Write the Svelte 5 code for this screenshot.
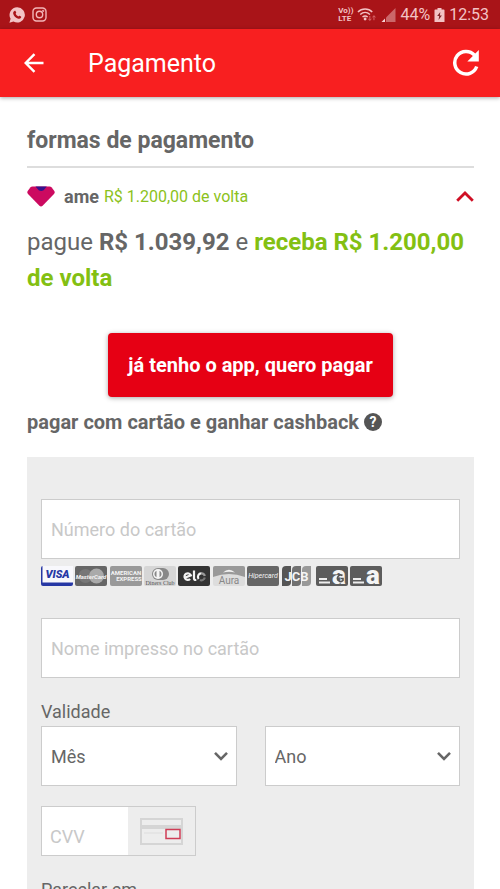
<script lang="ts">
  let open = $state(true);
  let cardNumber = $state('');
  let cardName = $state('');
  let month = $state('');
  let year = $state('');
  let cvv = $state('');
  let installments = $state('1');

  const months = Array.from({ length: 12 }, (_, i) => String(i + 1).padStart(2, '0'));
  const years = Array.from({ length: 12 }, (_, i) => String(2019 + i));
</script>

{#snippet chevron()}
  <svg class="chevron" width="16" height="10" viewBox="0 0 16 10" aria-hidden="true">
    <path d="M2 1.8l6 6 6-6" fill="none" stroke="currentColor" stroke-width="2.6" />
  </svg>
{/snippet}

<div class="screen">
  <div class="status-bar">
    <div class="status-group">
      <svg width="16" height="16" viewBox="0 0 16 16" aria-hidden="true">
        <path d="M8.2.3a7.6 7.6 0 1 1-3.7 14.2L.4 15.7l1.2-4A7.6 7.6 0 0 1 8.2.3z" fill="#f3c3c5" />
        <path d="M5.4 4c.5-.4 1-.3 1.2.2l.6 1.3c.1.4-.1.7-.6 1.3.6 1.2 1.4 2 2.7 2.6.6-.7.9-.9 1.3-.7l1.4.7c.4.3.3.8 0 1.3-.7 1-1.9 1.2-3.3.7-2.3-.9-3.7-2.3-4.4-4.4-.4-1.3.1-2.4 1.1-3z" fill="#a91418" />
      </svg>
      <svg width="15" height="15" viewBox="0 0 15 15" fill="none" stroke="#f3b5b7" stroke-width="1.4" aria-hidden="true">
        <rect x="1" y="1" width="13" height="13" rx="3.5" />
        <circle cx="7.5" cy="7.5" r="3.2" />
        <circle cx="11.2" cy="3.8" r="0.4" />
      </svg>
    </div>
    <div class="status-group tight">
      <span class="volte"><span>Vo))</span><span>LTE</span></span>
      <svg width="20" height="15" viewBox="0 0 21 15" aria-hidden="true">
        <g fill="none" stroke="#f3c3c5" stroke-width="1.5">
          <path d="M1 4.8C5 .6 12 .6 16 4.8" />
          <path d="M3.4 7.6c3-2.9 7.2-2.9 10.2 0" />
          <path d="M5.8 10.2c1.7-1.5 3.7-1.5 5.4 0" />
        </g>
        <circle cx="8.5" cy="12.2" r="1.5" fill="#f3c3c5" />
        <path d="M13.5 9v4.5M12 12l1.5 1.8L15 12M17.8 13.5V9M16.3 10.5l1.5-1.8 1.5 1.8" fill="none" stroke="#d9686b" />
      </svg>
      <svg width="15" height="14" viewBox="0 0 15 14" aria-hidden="true">
        <path d="M5 9.5L14.5 0v14H5z" fill="#cb6769" />
        <path d="M.5 14L4 10.5V14z" fill="#f6d5d6" />
      </svg>
      <span class="status-text">44%</span>
      <svg width="11" height="16" viewBox="0 0 11 16" aria-hidden="true">
        <path d="M3.5 1h4v1.5h2.2q.8 0 .8.8V15H.5V3.3q0-.8.8-.8h2.2z" fill="#f3c3c5" />
        <path d="M6.3 5L3.2 9h2L4.5 13l3.4-4.5h-2z" fill="#7f2528" />
      </svg>
      <span class="status-text">12:53</span>
    </div>
  </div>

  <header>
    <button type="button" class="icon-btn" aria-label="Voltar">
      <svg width="20" height="20" viewBox="0 0 20 20" aria-hidden="true">
        <path d="M19.5 10H2M10.5 1.2L1.7 10l8.8 8.8" fill="none" stroke="#fff" stroke-width="2.4" />
      </svg>
    </button>
    <h1>Pagamento</h1>
    <button type="button" class="icon-btn" aria-label="Recarregar">
      <svg width="28" height="28" viewBox="0 0 28 28" aria-hidden="true">
        <path d="M22.5 6.2A11.3 11.3 0 1 0 24.7 17.5" fill="none" stroke="#fff" stroke-width="3.5" />
        <path d="M26.8 1v11.5H15.3z" fill="#fff" />
      </svg>
    </button>
  </header>

  <main>
    <h2>formas de pagamento</h2>

    <button type="button" class="method" aria-expanded={open} onclick={() => (open = !open)}>
      <svg width="28" height="21" viewBox="0 0 28 21" aria-hidden="true">
        <path d="M5.5.5h17q1.3 0 2.2 1l2.6 3.5q1 1.6-.3 3L15.6 19.8q-1.6 1.4-3.2 0L1 8Q-.3 6.6.7 5l2.6-3.5q.9-1 2.2-1z" fill="#cc0a60" />
        <path d="M8.5.5h11.3l-3.2 3.8q-2.4 1.6-4.9 0z" fill="#35128c" />
      </svg>
      <span class="brand">ame</span>
      <span class="cashback">R$ 1.200,00 de volta</span>
      <svg class="toggle" class:closed={!open} width="18" height="11" viewBox="0 0 18 11" aria-hidden="true">
        <path d="M1.2 9.8L9 2l7.8 7.8" fill="none" stroke="#cf1025" stroke-width="2.8" />
      </svg>
    </button>

    {#if open}
      <p class="summary">
        pague <strong>R$ 1.039,92</strong> e <strong class="green">receba R$ 1.200,00 de volta</strong>
      </p>

      <button type="button" class="primary">já tenho o app, quero pagar</button>

      <div class="card-title">
        <h3>pagar com cartão e ganhar cashback</h3>
        <button type="button" class="help" aria-label="Ajuda">?</button>
      </div>

      <form onsubmit={(e) => e.preventDefault()}>
        <input class="field" type="text" inputmode="numeric" aria-label="Número do cartão" placeholder="Número do cartão" bind:value={cardNumber} />

        <div class="flags">
          <svg width="32" height="20" viewBox="0 0 32 20" role="img" aria-label="Visa">
            <rect width="32" height="20" rx="2" fill="#2637a4" />
            <path d="M1.5 0H32v16.5H1.5z" fill="#f8f8fc" />
            <text x="16.5" y="12" class="flag-text visa">VISA</text>
          </svg>
          <svg width="32" height="20" viewBox="0 0 32 20" role="img" aria-label="Mastercard">
            <rect width="32" height="20" rx="2" fill="#666" />
            <circle cx="10.5" cy="10" r="7" fill="#777" />
            <circle cx="21.5" cy="10" r="7.5" fill="#aaa" />
            <text x="16" y="12.5" class="flag-text script">MasterCard</text>
          </svg>
          <svg width="32" height="20" viewBox="0 0 32 20" role="img" aria-label="American Express">
            <rect width="32" height="20" rx="2" fill="#999" />
            <text x="16" y="9" class="flag-text amex">AMERICAN</text>
            <text x="19" y="15" class="flag-text amex">EXPRESS</text>
          </svg>
          <svg width="32" height="20" viewBox="0 0 32 20" role="img" aria-label="Diners Club">
            <rect width="32" height="20" rx="2" fill="#d6d6d6" />
            <rect x="8" y="2" width="17" height="12" rx="6" fill="#888" />
            <circle cx="14" cy="8" r="5" fill="#f5f5f5" />
            <path d="M12.5 4.8a3.5 3.5 0 0 0 0 6.4zM15.5 4.8a3.5 3.5 0 0 1 0 6.4z" fill="#888" />
            <text x="16" y="18.5" class="flag-text diners">Diners Club</text>
          </svg>
          <svg width="32" height="20" viewBox="0 0 32 20" role="img" aria-label="Elo">
            <rect width="32" height="20" rx="2" fill="#333" />
            <g fill="none" stroke="#f4f4f4" stroke-width="2.2">
              <path d="M6.8 11.8l6-2.5a3.3 3.3 0 1 0-.7 3.7" />
              <path d="M16 4.5v8q0 1.7 2.3 1.5" />
              <path d="M20.6 13a3.5 3.5 0 0 1 3-5.6" />
              <path d="M23.6 7.4a3.5 3.5 0 0 1 3.2 2.6" stroke="#999" />
              <path d="M26.8 11.5a3.5 3.5 0 0 1-4.8 2.5" stroke="#777" />
            </g>
          </svg>
          <svg width="32" height="20" viewBox="0 0 32 20" role="img" aria-label="Aura">
            <rect width="32" height="20" rx="2" fill="#ddd" />
            <path d="M0 2q0-2 2-2h28q2 0 2 2v9Q16 5 0 11z" fill="#999" />
            <path d="M10 6.5q6-5.5 12 0-6-1.5-12 0z" fill="#f2f2f2" />
            <text x="16" y="18" class="flag-text aura">Aura</text>
          </svg>
          <svg width="32" height="20" viewBox="0 0 32 20" role="img" aria-label="Hipercard">
            <rect width="32" height="20" rx="2" fill="#666" />
            <text x="16" y="12" class="flag-text hiper">Hipercard</text>
          </svg>
          <svg width="32" height="20" viewBox="0 0 32 20" role="img" aria-label="JCB">
            <path d="M5 0h5v16q0 4-4 4H1V4q0-4 4-4z" fill="#555" />
            <path d="M15 0h5v16q0 4-4 4h-5V4q0-4 4-4z" fill="#707070" />
            <path d="M25 0h5v16q0 4-4 4h-5V4q0-4 4-4z" fill="#999" />
            <text x="15.5" y="14.5" class="flag-text jcb">JCB</text>
          </svg>
          <svg width="32" height="20" viewBox="0 0 32 20" role="img" aria-label="Cartão Americanas Gold">
            <rect width="32" height="20" rx="2" fill="#5c5c5c" />
            <path d="M3 12h8v2H3zM3 15.5h11v2H3z" fill="#eee" />
            <text x="23" y="17.5" class="flag-text letter">a</text>
            <path d="M26.5 9.5a3.2 3.2 0 1 0 .5 5v-2h-2.5" fill="none" stroke="#555" stroke-width="1.6" />
          </svg>
          <svg width="32" height="20" viewBox="0 0 32 20" role="img" aria-label="Cartão Americanas">
            <rect width="32" height="20" rx="2" fill="#5c5c5c" />
            <path d="M3 12h8v2H3zM3 15.5h11v2H3z" fill="#eee" />
            <text x="23" y="17.5" class="flag-text letter">a</text>
          </svg>
        </div>

        <input class="field" type="text" aria-label="Nome impresso no cartão" placeholder="Nome impresso no cartão" bind:value={cardName} />

        <fieldset>
          <legend>Validade</legend>
          <div class="expiry">
            <div class="select">
              <select aria-label="Mês" bind:value={month}>
                <option value="">Mês</option>
                {#each months as m}
                  <option value={m}>{m}</option>
                {/each}
              </select>
              {@render chevron()}
            </div>
            <div class="select">
              <select aria-label="Ano" bind:value={year}>
                <option value="">Ano</option>
                {#each years as y}
                  <option value={y}>{y}</option>
                {/each}
              </select>
              {@render chevron()}
            </div>
          </div>
        </fieldset>

        <div class="cvv">
          <input type="text" inputmode="numeric" maxlength="4" aria-label="CVV" placeholder="CVV" bind:value={cvv} />
          <svg width="43" height="27" viewBox="0 0 43 27" fill="none" aria-hidden="true">
            <rect x="1" y="1" width="41" height="25" stroke="#d5d5d5" stroke-width="2" />
            <path d="M1 9h41" stroke="#d5d5d5" stroke-width="4" />
            <path d="M4 15h19" stroke="#ddd" />
            <rect x="26" y="11.5" width="14" height="9" fill="#ededed" stroke="#cf3d56" stroke-width="1.5" />
          </svg>
        </div>

        <label for="installments">Parcelar em</label>
        <div class="select">
          <select id="installments" bind:value={installments}>
            <option value="1">1x de R$ 1.039,92</option>
          </select>
          {@render chevron()}
        </div>
      </form>
    {/if}
  </main>
</div>

<style>
  :global(body) {
    margin: 0;
    background: #fff;
  }

  .screen {
    display: flex;
    flex-direction: column;
    height: 100vh;
    font-family: Roboto, "Liberation Sans", sans-serif;
    font-size: 18px;
    color: #666;
  }

  .screen :global(*) {
    box-sizing: border-box;
  }

  button,
  input,
  select {
    font: inherit;
    color: inherit;
  }

  button {
    border: none;
    padding: 0;
    background: none;
    cursor: pointer;
  }

  svg {
    display: block;
    flex-shrink: 0;
  }

  .status-bar {
    display: flex;
    align-items: center;
    justify-content: space-between;
    flex-shrink: 0;
    height: 29px;
    padding: 0 11px 0 9px;
    background: #a91418;
    color: #f3c3c5;
  }

  .status-group {
    display: flex;
    align-items: center;
    gap: 7px;
  }

  .status-group.tight {
    gap: 4px;
  }

  .volte {
    display: flex;
    flex-direction: column;
    font-size: 8px;
    font-weight: 700;
    line-height: 8px;
  }

  .status-text {
    font-size: 16px;
    line-height: 20px;
  }

  header {
    display: flex;
    align-items: center;
    flex-shrink: 0;
    height: 68px;
    padding: 0 14px;
    background: #f81f20;
    color: #fff;
    box-shadow: 0 1px 4px rgba(0, 0, 0, 0.35);
    z-index: 1;
  }

  .icon-btn {
    display: flex;
    align-items: center;
    justify-content: center;
    width: 40px;
    height: 40px;
  }

  h1 {
    flex: 1;
    margin: 2px 0 0 34px;
    font-size: 25px;
    font-weight: 400;
    line-height: 32px;
  }

  main {
    flex: 1;
    overflow-y: auto;
    padding: 30px 26px 0 27px;
    scrollbar-width: none;
  }

  h2 {
    margin: 0;
    padding-bottom: 11px;
    border-bottom: 2px solid #ddd;
    font-size: 23px;
    font-weight: 700;
    line-height: 28px;
  }

  .method {
    display: flex;
    align-items: center;
    width: 100%;
    height: 56px;
    text-align: left;
  }

  .brand {
    margin: 0 5px 0 9px;
    font-size: 18px;
    font-weight: 700;
  }

  .cashback {
    flex: 1;
    font-size: 16px;
    color: #8bc220;
  }

  .toggle.closed {
    transform: rotate(180deg);
  }

  .summary {
    margin: 0;
    font-size: 24px;
    line-height: 36px;
  }

  .summary strong {
    font-weight: 700;
  }

  .summary .green {
    color: #83c012;
  }

  .primary {
    display: block;
    margin: 37px auto 11px;
    padding: 0 20px;
    height: 64px;
    border-radius: 4px;
    background: #e60014;
    box-shadow: 0 1px 5px rgba(0, 0, 0, 0.35);
    color: #fff;
    font-size: 20px;
    font-weight: 700;
  }

  .card-title {
    display: flex;
    align-items: center;
    gap: 5px;
    margin-bottom: 21px;
  }

  h3 {
    margin: 0;
    font-size: 20px;
    font-weight: 700;
    line-height: 28px;
  }

  .help {
    width: 18px;
    height: 18px;
    border-radius: 50%;
    background: #555;
    color: #fff;
    font-size: 14px;
    font-weight: 700;
    line-height: 18px;
  }

  form {
    padding: 42px 14px 20px;
    background: #ededed;
  }

  .field,
  select {
    display: block;
    width: 100%;
    height: 60px;
    padding: 0 9px;
    border: 1px solid #ccc;
    border-radius: 0;
    background: #fff;
  }

  input::placeholder {
    color: #c8c8c8;
    opacity: 1;
  }

  .flags {
    display: flex;
    justify-content: space-between;
    max-width: 341px;
    margin: 7px 0 32px;
  }

  .flags svg {
    overflow: visible;
  }

  .flag-text {
    fill: #f4f4f4;
    font-size: 6px;
    text-anchor: middle;
  }

  .visa {
    fill: #2637a4;
    font-size: 11px;
    font-style: italic;
    font-weight: 900;
  }

  .script {
    font-style: italic;
    font-weight: 700;
  }

  .hiper {
    font-size: 7px;
    font-style: italic;
  }

  .amex {
    font-weight: 700;
  }

  .diners {
    fill: #555;
    font-family: "Liberation Serif", serif;
  }

  .aura {
    fill: #888;
    font-size: 10px;
  }

  .jcb {
    font-size: 13px;
    font-weight: 700;
  }

  .letter {
    font-size: 26px;
    font-weight: 900;
  }

  fieldset {
    min-width: 0;
    margin: 20px 0;
    padding: 0;
    border: none;
  }

  legend,
  label {
    display: block;
    padding: 0;
    line-height: 28px;
  }

  .expiry {
    display: grid;
    grid-template-columns: 1fr 1fr;
    gap: 28px;
  }

  .select {
    position: relative;
  }

  select {
    appearance: none;
    padding-right: 32px;
  }

  .chevron {
    position: absolute;
    top: 25px;
    right: 8px;
    pointer-events: none;
  }

  .cvv {
    display: flex;
    align-items: center;
    width: 155px;
    height: 50px;
    margin-bottom: 20px;
    padding-right: 12px;
    border: 1px solid #ccc;
  }

  .cvv input {
    flex: 1;
    min-width: 0;
    height: 100%;
    margin-right: 12px;
    padding: 10px 8px 0;
    border: none;
    background: #fff;
  }
</style>
